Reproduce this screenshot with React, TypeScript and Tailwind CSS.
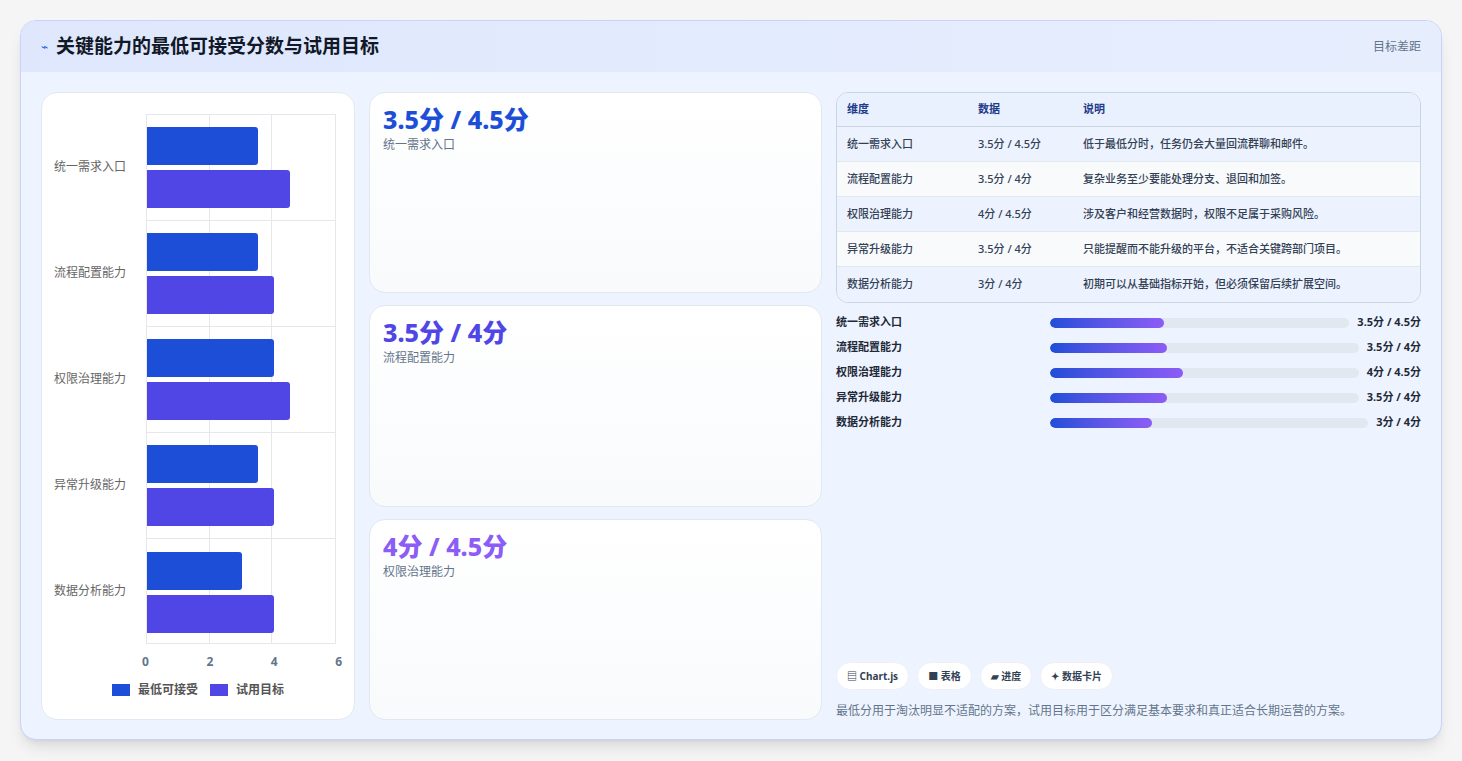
const rows = [
  { name: "统一需求入口", min: 3.5, target: 4.5, data: "3.5分 / 4.5分", note: "低于最低分时，任务仍会大量回流群聊和邮件。", pct: 38 },
  { name: "流程配置能力", min: 3.5, target: 4, data: "3.5分 / 4分", note: "复杂业务至少要能处理分支、退回和加签。", pct: 38 },
  { name: "权限治理能力", min: 4, target: 4.5, data: "4分 / 4.5分", note: "涉及客户和经营数据时，权限不足属于采购风险。", pct: 43 },
  { name: "异常升级能力", min: 3.5, target: 4, data: "3.5分 / 4分", note: "只能提醒而不能升级的平台，不适合关键跨部门项目。", pct: 38 },
  { name: "数据分析能力", min: 3, target: 4, data: "3分 / 4分", note: "初期可以从基础指标开始，但必须保留后续扩展空间。", pct: 32 },
];

const font = { fontFamily: '"Noto Sans", "Noto Sans CJK SC", sans-serif' };

function Chart() {
  return (
    <div className="bg-white rounded-2xl border border-[#e2e8f0] w-[314px] flex flex-col px-3 pt-[21px] pb-[20px]">
      <div className="flex">
        <div className="w-[92px] flex flex-col">
          {rows.map((r) => (
            <div key={r.name} className="h-[106px] flex items-center text-[12px] text-[#666] whitespace-nowrap">
              {r.name}
            </div>
          ))}
        </div>
        <div className="relative w-[190px] h-[530px] border-l border-t border-r border-b border-[#e5e7eb]">
          <div className="absolute inset-0 grid grid-cols-3">
            <div className="border-r border-[#e5e7eb]" />
            <div className="border-r border-[#e5e7eb]" />
            <div />
          </div>
          <div className="relative flex flex-col">
            {rows.map((r) => (
              <div key={r.name} className="h-[106px] flex flex-col justify-center gap-[5px] border-b border-[#e5e7eb] last:border-b-0">
                <div className="h-[38px] bg-[#1d4ed8] rounded-r-[3px]" style={{ width: `${(r.min / 6) * 190}px` }} />
                <div className="h-[38px] bg-[#4f46e5] rounded-r-[3px]" style={{ width: `${(r.target / 6) * 190}px` }} />
              </div>
            ))}
          </div>
        </div>
      </div>
      <div className="ml-[88px] w-[200px] flex justify-between text-[12px] font-bold text-[#64748b] mt-[9px]">
        <span>0</span><span>2</span><span>4</span><span>6</span>
      </div>
      <div className="flex justify-center gap-2 mt-[10px] text-[12px] font-bold text-[#555] items-center">
        <span className="w-[18px] h-[12px] bg-[#1d4ed8]" /> 最低可接受
        <span className="w-[18px] h-[12px] bg-[#4f46e5] ml-1" /> 试用目标
      </div>
    </div>
  );
}

function StatCard({ value, label, color }: { value: string; label: string; color: string }) {
  return (
    <div className="flex-1 rounded-2xl border border-[#e2e8f0] bg-gradient-to-b from-white to-[#f8fafc] px-[13px] py-[10px]">
      <div className={`text-[25px] font-extrabold leading-[32px] ${color}`}>{value}</div>
      <div className="text-[12px] text-[#64748b] mt-[1px]">{label}</div>
    </div>
  );
}

export default function App() {
  return (
    <div className="min-h-screen bg-[#f5f5f5] p-5" style={font}>
      <div className="rounded-2xl border border-[#c7d2fe] bg-[#eef4ff] shadow-lg overflow-hidden h-[720px] flex flex-col">
        <div className="h-[56px] bg-gradient-to-r from-[#dfe7fd] to-[#e6eefe] flex items-center justify-between px-5">
          <div className="flex items-center gap-2">
            <span className="text-[#2563eb] text-[12px]">⌁</span>
            <span className="text-[19px] font-bold text-[#111827]">关键能力的最低可接受分数与试用目标</span>
          </div>
          <span className="text-[12px] text-[#64748b]">目标差距</span>
        </div>
        <div className="flex-1 flex gap-[14px] p-5 pb-[19px]">
          <Chart />
          <div className="w-[453px] flex flex-col gap-[12px]">
            <StatCard value="3.5分 / 4.5分" label="统一需求入口" color="text-[#1d4ed8]" />
            <StatCard value="3.5分 / 4分" label="流程配置能力" color="text-[#4f46e5]" />
            <StatCard value="4分 / 4.5分" label="权限治理能力" color="text-[#8b5cf6]" />
          </div>
          <div className="flex-1 flex flex-col">
            <div className="rounded-xl border border-[#cbd5e1] overflow-hidden text-[11px]">
              <div className="flex h-[34px] items-center bg-[#eaf1fe] font-bold text-[#1e3a8a] border-b border-[#cbd5e1]">
                <div className="w-[141px] pl-[10px]">维度</div>
                <div className="w-[105px]">数据</div>
                <div>说明</div>
              </div>
              {rows.map((r, i) => (
                <div key={r.name} className={`flex h-[35px] items-center text-[#334155] font-medium ${i % 2 ? "bg-[#f8fafc]" : "bg-[#edf3fe]"} ${i < 4 ? "border-b border-[#e2e8f0]" : ""}`}>
                  <div className="w-[141px] pl-[10px]">{r.name}</div>
                  <div className="w-[105px]">{r.data}</div>
                  <div>{r.note}</div>
                </div>
              ))}
            </div>
            <div className="flex flex-col gap-[6px] mt-[10px]">
              {rows.map((r) => (
                <div key={r.name} className="flex items-center h-[19px] text-[11px] font-bold text-[#1f2937]">
                  <div className="w-[214px] shrink-0">{r.name}</div>
                  <div className="flex-1 h-[10px] rounded-full bg-[#e2e8f0] mr-2 overflow-hidden">
                    <div className="h-full rounded-full bg-gradient-to-r from-[#1d4ed8] to-[#8b5cf6]" style={{ width: `${r.pct}%` }} />
                  </div>
                  <div className="whitespace-nowrap">{r.data}</div>
                </div>
              ))}
            </div>
            <div className="flex-1" />
            <div className="flex gap-2 text-[10px] font-bold text-[#334155]">
              {["▤ Chart.js", "■ 表格", "▰ 进度", "✦ 数据卡片"].map((c) => (
                <span key={c} className="h-[28px] px-[10px] flex items-center rounded-full bg-white border border-[#eef0f4]">{c}</span>
              ))}
            </div>
            <div className="text-[12px] text-[#64748b] mt-[12px]">
              最低分用于淘汰明显不适配的方案，试用目标用于区分满足基本要求和真正适合长期运营的方案。
            </div>
          </div>
        </div>
      </div>
    </div>
  );
}
